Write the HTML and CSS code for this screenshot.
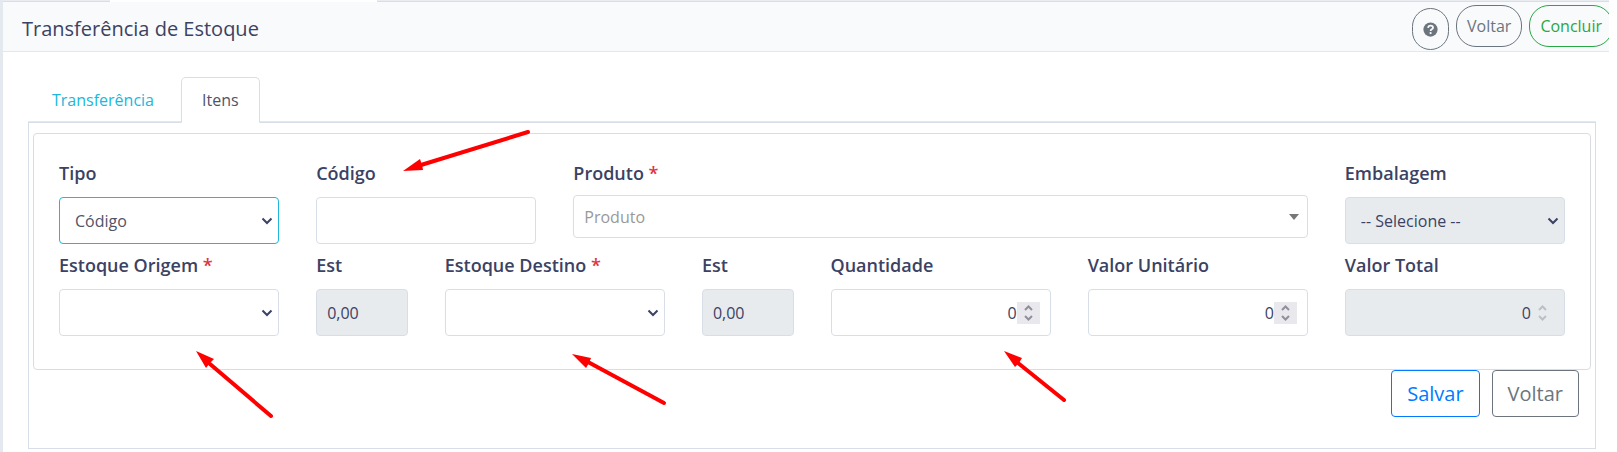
FILE: index.html
```html
<!DOCTYPE html>
<html lang="pt-br">
  <head>
    <meta charset="UTF-8" />
    <meta name="viewport" content="width=device-width, initial-scale=1.0" />
    <title>Transferência de Estoque</title>
    <link rel="stylesheet" href="styles.css">
  </head>
  <body>
    <div class="janela">
      <div class="abas-topo"><span class="aba-topo"></span></div>

      <header class="cabecalho">
        <h1>Transferência de Estoque</h1>
        <div class="acoes">
          <button class="btn btn-pill btn-ajuda" type="button" aria-label="Ajuda">
            <svg viewBox="0 0 16 16" width="15" height="15" aria-hidden="true">
              <circle cx="8" cy="8" r="7.6" fill="#6c757d" />
              <path d="M5.4 6.2C5.6 4.6 6.7 3.9 8.1 3.9C9.6 3.9 10.7 4.8 10.7 6.1C10.7 7.8 8.1 7.8 8.1 9.5" fill="none" stroke="#f9fafc" stroke-width="1.9" />
              <circle cx="8.1" cy="11.8" r="1.2" fill="#f9fafc" />
            </svg>
          </button>
          <button class="btn btn-pill" type="button">Voltar</button>
          <button class="btn btn-pill btn-verde" type="button">Concluir</button>
        </div>
      </header>

      <main>
        <nav class="abas">
          <a href="#transferencia">Transferência</a>
          <a href="#itens" class="ativa">Itens</a>
        </nav>

        <form class="painel" id="itens">
          <div class="cartao">
            <div class="campo c2">
              <label for="tipo">Tipo</label>
              <div class="caixa">
                <select id="tipo" class="controle foco"><option>Código</option></select>
                <svg class="seta" viewBox="0 0 12 8"><path d="M1.5 1.5L6 6L10.5 1.5" /></svg>
              </div>
            </div>
            <div class="campo c2">
              <label for="codigo">Código</label>
              <input id="codigo" class="controle" type="text" />
            </div>
            <div class="campo c6">
              <label for="produto">Produto <span class="obrigatorio">*</span></label>
              <div class="caixa">
                <select id="produto" class="controle produto"><option>Produto</option></select>
                <svg class="triangulo" viewBox="0 0 10 6"><path d="M0 0H10L5 6Z" /></svg>
              </div>
            </div>
            <div class="campo c2">
              <label for="embalagem">Embalagem</label>
              <div class="caixa">
                <select id="embalagem" class="controle" disabled><option>-- Selecione --</option></select>
                <svg class="seta" viewBox="0 0 12 8"><path d="M1.5 1.5L6 6L10.5 1.5" /></svg>
              </div>
            </div>

            <div class="campo c2">
              <label for="origem">Estoque Origem <span class="obrigatorio">*</span></label>
              <div class="caixa">
                <select id="origem" class="controle"><option></option></select>
                <svg class="seta" viewBox="0 0 12 8"><path d="M1.5 1.5L6 6L10.5 1.5" /></svg>
              </div>
            </div>
            <div class="campo">
              <label for="est-origem">Est</label>
              <input id="est-origem" class="controle" type="text" value="0,00" disabled />
            </div>
            <div class="campo c2">
              <label for="destino">Estoque Destino <span class="obrigatorio">*</span></label>
              <div class="caixa">
                <select id="destino" class="controle"><option></option></select>
                <svg class="seta" viewBox="0 0 12 8"><path d="M1.5 1.5L6 6L10.5 1.5" /></svg>
              </div>
            </div>
            <div class="campo">
              <label for="est-destino">Est</label>
              <input id="est-destino" class="controle" type="text" value="0,00" disabled />
            </div>
            <div class="campo c2">
              <label for="quantidade">Quantidade</label>
              <div class="caixa">
                <input id="quantidade" class="controle numero" type="number" value="0" />
                <svg class="passo" viewBox="0 0 23 22"><path d="M8 8L11.5 4.5L15 8M8 14L11.5 17.5L15 14" /></svg>
              </div>
            </div>
            <div class="campo c2">
              <label for="unitario">Valor Unitário</label>
              <div class="caixa">
                <input id="unitario" class="controle numero" type="number" value="0" />
                <svg class="passo" viewBox="0 0 23 22"><path d="M8 8L11.5 4.5L15 8M8 14L11.5 17.5L15 14" /></svg>
              </div>
            </div>
            <div class="campo c2">
              <label for="total">Valor Total</label>
              <div class="caixa">
                <input id="total" class="controle numero" type="number" value="0" disabled />
                <svg class="passo inativo" viewBox="0 0 23 22"><path d="M8 8L11.5 4.5L15 8M8 14L11.5 17.5L15 14" /></svg>
              </div>
            </div>
          </div>

          <div class="rodape">
            <button class="btn btn-grande btn-azul" type="button">Salvar</button>
            <button class="btn btn-grande" type="button">Voltar</button>
          </div>
        </form>
      </main>
    </div>

    <!-- setas de destaque sobre os campos -->
    <svg class="destaques" width="1617" height="452" viewBox="0 0 1617 452" aria-hidden="true">
      <g class="hastes">
        <path d="M528 132L421 165" />
        <path d="M271 416L210 364" />
        <path d="M664 403L588 362" />
        <path d="M1064 400L1018 363" />
      </g>
      <g class="pontas">
        <path d="M403 171L420 159L422 165L423 170Z" />
        <path d="M196 351L214 359L210 363L206 368Z" />
        <path d="M572 354L591 358L589 363L586 368Z" />
        <path d="M1004 351L1022 358L1019 363L1015 367Z" />
      </g>
    </svg>
  </body>
</html>
```
FILE: styles.css
```css
* {
  box-sizing: border-box;
}

body {
  margin: 0;
  overflow: hidden;
  background-color: white;
  color: #3b4263;
  font-family: "Open Sans", sans-serif;
  font-size: 16px;
  line-height: 26px;
}

.janela {
  min-height: 100vh;
  margin-right: 8px;
  overflow: hidden;
  background-color: white;
  border-left: 3px solid #e4e9f0;
}

.abas-topo {
  height: 2px;
  background-color: #e9edf2;
  border-bottom: 1px solid #d8dee8;
}

.aba-topo {
  display: block;
  width: 267px;
  height: 2px;
  margin-left: 107px;
  background-color: white;
}

.cabecalho {
  display: flex;
  justify-content: space-between;
  align-items: center;
  height: 50px;
  padding-left: 19px;
  background-color: #f9fafc;
  border-bottom: 1px solid #e4e8ee;
}

h1 {
  margin: 0;
  padding-top: 4px;
  font-size: 20px;
  font-weight: 400;
}

.acoes {
  display: flex;
  gap: 7px;
  align-self: flex-start;
  padding-top: 3px;
  margin-right: -4px;
}

.btn {
  padding: 7px 10px;
  background-color: transparent;
  border: 1px solid #6c757d;
  border-radius: 4px;
  color: #6c757d;
  font: inherit;
  cursor: pointer;
}

.btn-pill {
  height: 42px;
  border-radius: 20px;
}

.btn-ajuda {
  display: flex;
  align-items: center;
  margin-top: 3px;
}

.btn-verde {
  border-color: #28a745;
  color: #28a745;
}

main {
  padding: 25px 13px 3px 25px;
}

.abas {
  display: flex;
  gap: 6px;
  padding-left: 3px;
  border-bottom: 1px solid #e4e8ee;
}

.abas a {
  padding: 9px 20px;
  margin-bottom: -2px;
  border: 1px solid transparent;
  border-radius: 5px 5px 0 0;
  color: #20b7dc;
  text-decoration: none;
}

.abas .ativa {
  z-index: 1;
  background-color: white;
  border-color: #d8dee8;
  border-bottom-color: white;
  color: #4f5467;
}

.painel {
  padding: 10px 4px 31px;
  border: 1px solid #d8dee8;
}

.cartao {
  display: grid;
  grid-template-columns: repeat(12, minmax(0, 1fr));
  column-gap: 37px;
  row-gap: 8px;
  padding: 26px 25px 33px;
  border: 1px solid #d9dce2;
  border-radius: 4px;
}

.c2 {
  grid-column: span 2;
}

.c6 {
  grid-column: span 6;
}

label {
  display: block;
  margin-bottom: 11px;
  font-size: 18px;
  font-weight: 600;
}

.obrigatorio {
  color: #dc3545;
}

.caixa {
  position: relative;
}

.controle {
  display: block;
  width: 100%;
  height: 47px;
  padding: 0 10px;
  appearance: none;
  background-color: white;
  border: 1px solid #d8dee8;
  border-radius: 4px;
  color: #3b4263;
  font: inherit;
}

select.controle {
  padding: 0 15px;
}

.controle:disabled {
  background-color: #e8ebee;
  opacity: 1;
}

.foco {
  border-color: #20b7dc;
  color: #4f5467;
}

select.produto {
  height: 43px;
  padding: 0 10px;
  color: #999;
}

.campo.c6 label {
  margin-bottom: 9px;
}

.numero {
  padding-right: 34px;
  appearance: textfield;
  text-align: right;
}

.numero::-webkit-inner-spin-button {
  display: none;
}

.seta,
.triangulo,
.passo {
  position: absolute;
  top: 0;
  bottom: 0;
  margin: auto 0;
  pointer-events: none;
}

.seta {
  right: 6px;
  width: 12px;
  height: 8px;
  fill: none;
  stroke: #3b4263;
  stroke-width: 2;
}

.triangulo {
  right: 9px;
  width: 10px;
  height: 6px;
  fill: #777;
}

.passo {
  right: 11px;
  width: 23px;
  height: 22px;
  background-color: #e9e9ed;
  fill: none;
  stroke: #8f8f9d;
  stroke-width: 2;
}

.inativo {
  background-color: transparent;
  stroke: #bdbfc6;
}

.numero.controle {
  padding-right: 33px;
}

.rodape {
  display: flex;
  justify-content: flex-end;
  gap: 12px;
  padding-right: 12px;
}

.btn-grande {
  height: 47px;
  padding: 9px 15px;
  font-size: 20px;
}

.btn-azul {
  border-color: #007bff;
  color: #007bff;
}

.destaques {
  position: absolute;
  top: 0;
  left: 0;
  pointer-events: none;
}

.hastes {
  fill: none;
  stroke: #f00;
  stroke-width: 4;
  stroke-linecap: round;
}

.pontas {
  fill: #f00;
}
```
